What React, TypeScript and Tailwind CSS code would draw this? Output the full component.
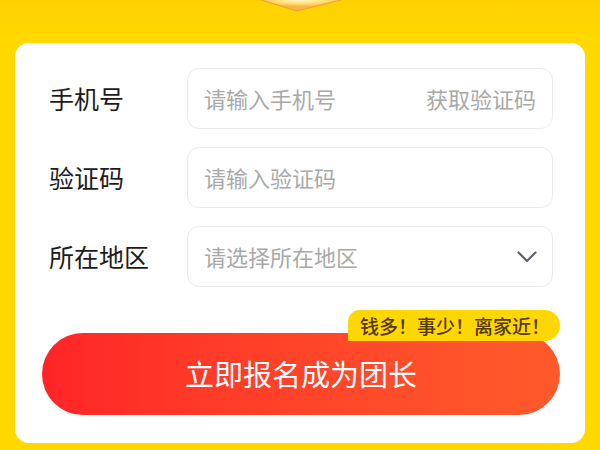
import React from "react";

function Row({ label, placeholder, right, chevron }: { label: string; placeholder: string; right?: string; chevron?: boolean }) {
  return (
    <div className="flex items-center">
      <div className="w-[138px] shrink-0 text-[25px] leading-none text-[#1c1c1c]">{label}</div>
      <div className="flex h-[61px] flex-1 items-center rounded-[12px] border border-[#ebebeb] bg-white pl-[16px] pr-[16px]">
        <input
          className="min-w-0 flex-1 bg-transparent text-[22px] text-[#333] outline-none placeholder:text-[#a9a9a9]"
          placeholder={placeholder}
        />
        {right && <span className="text-[22px] text-[#a9a9a9]">{right}</span>}
        {chevron && (
          <svg width="20" height="12" viewBox="0 0 20 12" fill="none" className="mr-[-1px]">
            <polyline points="1.5,1.5 10,10 18.5,1.5" stroke="#5d6470" strokeWidth="2.2" strokeLinecap="round" strokeLinejoin="round" />
          </svg>
        )}
      </div>
    </div>
  );
}

export default function App() {
  return (
    <div
      className="flex h-[450px] w-[600px] flex-col overflow-hidden bg-[#ffd800]"
      style={{ fontFamily: '"Noto Sans CJK SC", "Noto Sans", sans-serif' }}
    >
      <div className="relative h-[43px] shrink-0 bg-gradient-to-b from-[#ffd000] to-[#ffda00]">
        <svg className="absolute left-[255px] top-0" width="90" height="14" viewBox="0 0 90 14">
          <defs>
            <radialGradient id="glow" cx="0.5" cy="0" r="0.6">
              <stop offset="0" stopColor="#fff6d0" />
              <stop offset="0.5" stopColor="#ffe27a" />
              <stop offset="1" stopColor="#f7b640" />
            </radialGradient>
          </defs>
          <polygon points="6,0 86,0 42,11" fill="url(#glow)" />
          <polyline points="6,0 42,11 86,0" fill="none" stroke="#eea23a" strokeWidth="1.2" />
        </svg>
      </div>
      <div className="mx-[15px] flex h-[400px] flex-col rounded-[14px] bg-white pl-[34px] pr-[32px] pt-[25px]">
        <div className="flex flex-col gap-[18px]">
          <Row label="手机号" placeholder="请输入手机号" right="获取验证码" />
          <Row label="验证码" placeholder="请输入验证码" />
          <Row label="所在地区" placeholder="请选择所在地区" chevron />
        </div>
        <div className="relative ml-[-7px] mr-[-7px] mt-[46px]">
          <button className="flex h-[82px] w-full items-center justify-center rounded-full bg-gradient-to-r from-[#ff2427] to-[#ff5a2b] text-[29px] text-white">
            立即报名成为团长
          </button>
          <div className="absolute right-0 top-[-23px] flex h-[31px] w-[212px] items-center justify-center rounded-tl-[12px] rounded-r-[16px] bg-[#ffd700] pl-[2px] text-[19px] font-medium leading-none text-[#553800]">
            钱多！事少！离家近！
          </div>
        </div>
      </div>
    </div>
  );
}
